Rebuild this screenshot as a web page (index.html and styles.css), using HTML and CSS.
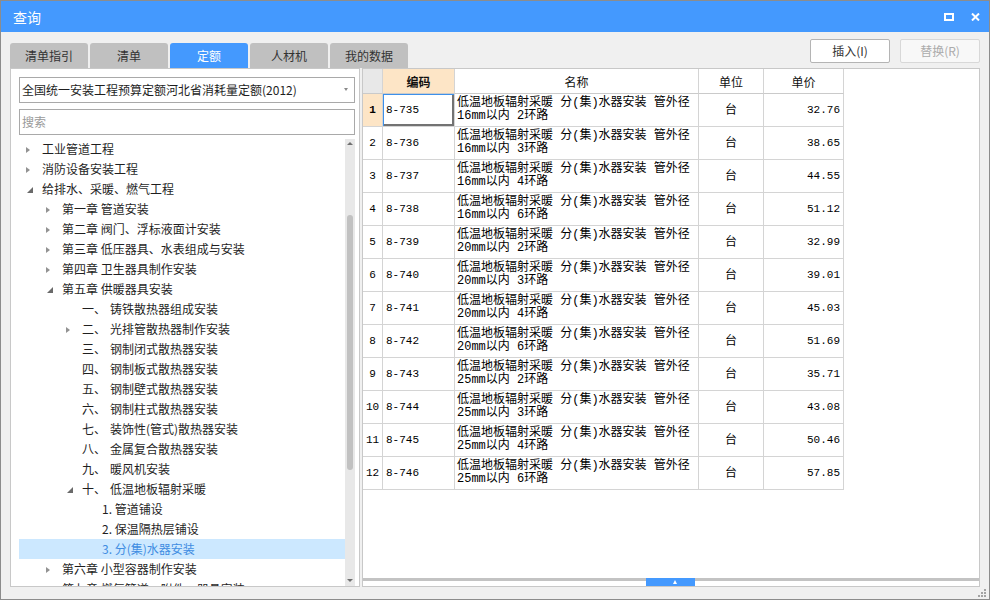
FILE: index.html
```html
<!DOCTYPE html>
<html lang="zh-CN">
<head>
<meta charset="utf-8">
<title>查询</title>
<link rel="stylesheet" href="styles.css">
</head>
<body>
<div class="window">
  <div class="titlebar">
    <span class="title">查询</span>
    <div class="win-btns">
      <svg class="ico" width="10" height="8" viewBox="0 0 10 8"><rect x="1" y="1" width="8" height="6" fill="none" stroke="#fff" stroke-width="2"/></svg>
      <svg class="ico" width="9" height="8" viewBox="0 0 9 8"><path d="M1 0.5L8 7.5M8 0.5L1 7.5" stroke="#fff" stroke-width="2"/></svg>
    </div>
  </div>
  <div class="toolbar">
    <div class="tabs">
      <div class="tab">清单指引</div>
      <div class="tab">清单</div>
      <div class="tab active">定额</div>
      <div class="tab">人材机</div>
      <div class="tab">我的数据</div>
    </div>
    <div class="actions">
      <button class="btn">插入(I)</button>
      <button class="btn disabled">替换(R)</button>
    </div>
  </div>
  <div class="main">
    <div class="left-panel">
      <div class="select"><span class="select-text">全国统一安装工程预算定额河北省消耗量定额(2012)</span><span class="caret"></span></div>
      <div class="search">搜索</div>
      <div class="tree-wrap">
        <div class="tree">
          <div class="row l0"><span class="tw"><i class="exp-c"></i></span>工业管道工程</div>
          <div class="row l0"><span class="tw"><i class="exp-c"></i></span>消防设备安装工程</div>
          <div class="row l0"><span class="tw"><i class="exp-o"></i></span>给排水、采暖、燃气工程</div>
          <div class="row l1"><span class="tw"><i class="exp-c"></i></span>第一章 管道安装</div>
          <div class="row l1"><span class="tw"><i class="exp-c"></i></span>第二章 阀门、浮标液面计安装</div>
          <div class="row l1"><span class="tw"><i class="exp-c"></i></span>第三章 低压器具、水表组成与安装</div>
          <div class="row l1"><span class="tw"><i class="exp-c"></i></span>第四章 卫生器具制作安装</div>
          <div class="row l1"><span class="tw"><i class="exp-o"></i></span>第五章 供暖器具安装</div>
          <div class="row l2"><span class="tw"></span><span class="ord">一、</span>铸铁散热器组成安装</div>
          <div class="row l2"><span class="tw"><i class="exp-c"></i></span><span class="ord">二、</span>光排管散热器制作安装</div>
          <div class="row l2"><span class="tw"></span><span class="ord">三、</span>钢制闭式散热器安装</div>
          <div class="row l2"><span class="tw"></span><span class="ord">四、</span>钢制板式散热器安装</div>
          <div class="row l2"><span class="tw"></span><span class="ord">五、</span>钢制壁式散热器安装</div>
          <div class="row l2"><span class="tw"></span><span class="ord">六、</span>钢制柱式散热器安装</div>
          <div class="row l2"><span class="tw"></span><span class="ord">七、</span>装饰性(管式)散热器安装</div>
          <div class="row l2"><span class="tw"></span><span class="ord">八、</span>金属复合散热器安装</div>
          <div class="row l2"><span class="tw"></span><span class="ord">九、</span>暖风机安装</div>
          <div class="row l2"><span class="tw"><i class="exp-o"></i></span><span class="ord">十、</span>低温地板辐射采暖</div>
          <div class="row l3"><span class="tw"></span>1. 管道铺设</div>
          <div class="row l3"><span class="tw"></span>2. 保温隔热层铺设</div>
          <div class="row l3 selected"><span class="tw"></span>3. 分(集)水器安装</div>
          <div class="row l1"><span class="tw"><i class="exp-c"></i></span>第六章 小型容器制作安装</div>
          <div class="row l1"><span class="tw"><i class="exp-c"></i></span>第七章 燃气管道、附件、器具安装</div>
        </div>
        <div class="vscroll">
          <div class="vs-up"><i class="tri-up"></i></div>
          <div class="vs-thumb"></div>
          <div class="vs-down"><i class="tri-down"></i></div>
        </div>
      </div>
    </div>
    <div class="right-panel">
      <div class="grid-area">
        <div class="grid">
          <div class="c hd corner"></div>
          <div class="c hd sel-col">编码</div>
          <div class="c hd">名称</div>
          <div class="c hd">单位</div>
          <div class="c hd">单价</div>

          <div class="c num sel-row">1</div><div class="c code focus">8-735</div><div class="c name">低温地板辐射采暖 分(集)水器安装 管外径 16mm以内 2环路</div><div class="c unit">台</div><div class="c price">32.76</div>
          <div class="c num">2</div><div class="c code">8-736</div><div class="c name">低温地板辐射采暖 分(集)水器安装 管外径 16mm以内 3环路</div><div class="c unit">台</div><div class="c price">38.65</div>
          <div class="c num">3</div><div class="c code">8-737</div><div class="c name">低温地板辐射采暖 分(集)水器安装 管外径 16mm以内 4环路</div><div class="c unit">台</div><div class="c price">44.55</div>
          <div class="c num">4</div><div class="c code">8-738</div><div class="c name">低温地板辐射采暖 分(集)水器安装 管外径 16mm以内 6环路</div><div class="c unit">台</div><div class="c price">51.12</div>
          <div class="c num">5</div><div class="c code">8-739</div><div class="c name">低温地板辐射采暖 分(集)水器安装 管外径 20mm以内 2环路</div><div class="c unit">台</div><div class="c price">32.99</div>
          <div class="c num">6</div><div class="c code">8-740</div><div class="c name">低温地板辐射采暖 分(集)水器安装 管外径 20mm以内 3环路</div><div class="c unit">台</div><div class="c price">39.01</div>
          <div class="c num">7</div><div class="c code">8-741</div><div class="c name">低温地板辐射采暖 分(集)水器安装 管外径 20mm以内 4环路</div><div class="c unit">台</div><div class="c price">45.03</div>
          <div class="c num">8</div><div class="c code">8-742</div><div class="c name">低温地板辐射采暖 分(集)水器安装 管外径 20mm以内 6环路</div><div class="c unit">台</div><div class="c price">51.69</div>
          <div class="c num">9</div><div class="c code">8-743</div><div class="c name">低温地板辐射采暖 分(集)水器安装 管外径 25mm以内 2环路</div><div class="c unit">台</div><div class="c price">35.71</div>
          <div class="c num">10</div><div class="c code">8-744</div><div class="c name">低温地板辐射采暖 分(集)水器安装 管外径 25mm以内 3环路</div><div class="c unit">台</div><div class="c price">43.08</div>
          <div class="c num">11</div><div class="c code">8-745</div><div class="c name">低温地板辐射采暖 分(集)水器安装 管外径 25mm以内 4环路</div><div class="c unit">台</div><div class="c price">50.46</div>
          <div class="c num">12</div><div class="c code">8-746</div><div class="c name">低温地板辐射采暖 分(集)水器安装 管外径 25mm以内 6环路</div><div class="c unit">台</div><div class="c price">57.85</div>
        </div>
      </div>
      <div class="hbar"><div class="hthumb"><i class="tri-up-w"></i></div></div>
    </div>
  </div>
  <svg class="grip" width="8" height="8" viewBox="0 0 8 8">
    <rect x="6" y="0" width="2" height="2" fill="#a3a3a3"/>
    <rect x="3" y="3" width="2" height="2" fill="#a3a3a3"/>
    <rect x="6" y="3" width="2" height="2" fill="#a3a3a3"/>
    <rect x="0" y="6" width="2" height="2" fill="#a3a3a3"/>
    <rect x="3" y="6" width="2" height="2" fill="#a3a3a3"/>
    <rect x="6" y="6" width="2" height="2" fill="#a3a3a3"/>
  </svg>
</div>
</body>
</html>
```

FILE: styles.css
```css
html, body {
  margin: 0;
  padding: 0;
  background: #ffffff;
}

body {
  font-family: "Noto Sans CJK SC", "Liberation Sans", sans-serif;
}

.window {
  position: relative;
  width: 990px;
  height: 600px;
  box-sizing: border-box;
  border: 1px solid #8c8c8c;
  background: #f0f0f0;
  display: flex;
  flex-direction: column;
  overflow: hidden;
}

/* Title bar */
.titlebar {
  flex: none;
  height: 31px;
  background: #4499fe;
  display: flex;
  align-items: center;
  padding: 0 9px 0 12px;
  color: #ffffff;
}

.title {
  font-size: 14px;
  line-height: 20px;
}

.win-btns {
  margin-left: auto;
  display: flex;
  align-items: center;
  gap: 17px;
}

.ico {
  display: block;
}

/* Tabs + actions */
.toolbar {
  flex: none;
  height: 36px;
  display: flex;
  padding: 0 9px;
}

.tabs {
  align-self: flex-end;
  display: flex;
  gap: 2px;
}

.tab {
  width: 78px;
  height: 25px;
  background: #c0c0c0;
  border-radius: 3px 3px 0 0;
  font-size: 12px;
  line-height: 25px;
  text-align: center;
  color: #333333;
}

.tab.active {
  background: #4499fe;
  color: #ffffff;
}

.actions {
  margin-left: auto;
  margin-top: 7px;
  align-self: flex-start;
  display: flex;
  gap: 10px;
}

.btn {
  width: 80px;
  height: 24px;
  box-sizing: border-box;
  padding: 0;
  border: 1px solid #b4b4b4;
  border-radius: 2px;
  background: #ffffff;
  font-family: "Noto Sans CJK SC", "Liberation Sans", sans-serif;
  font-size: 12px;
  line-height: 20px;
  color: #333333;
}

.btn.disabled {
  color: #ababab;
  border-color: #d8d8d8;
  background: #f8f8f8;
}

/* Main area */
.main {
  flex: 1;
  min-height: 0;
  display: flex;
  gap: 2px;
  padding: 0 9px 12px 9px;
}

.left-panel {
  flex: none;
  width: 350px;
  box-sizing: border-box;
  border: 1px solid #c8c8c8;
  background: #ffffff;
  padding: 8px 4px 0 8px;
  display: flex;
  flex-direction: column;
}

.select {
  flex: none;
  height: 26px;
  box-sizing: border-box;
  border: 1px solid #a9a9a9;
  display: flex;
  align-items: center;
  padding: 0 6px 0 2px;
  font-size: 12px;
  color: #1e1e1e;
}

.select-text {
  flex: 1;
  line-height: 20px;
}

.caret {
  width: 0;
  height: 0;
  border-top: 3px solid #8a8a8a;
  border-left: 2.5px solid transparent;
  border-right: 2.5px solid transparent;
  margin-top: -2px;
}

.search {
  flex: none;
  margin-top: 6px;
  height: 26px;
  box-sizing: border-box;
  border: 1px solid #a9a9a9;
  padding-left: 2px;
  font-size: 12px;
  line-height: 24px;
  color: #9a9a9a;
}

.tree-wrap {
  flex: 1;
  min-height: 0;
  margin-top: 4px;
  display: flex;
  overflow: hidden;
}

.tree {
  flex: 1;
  min-width: 0;
}

.row {
  height: 20px;
  display: flex;
  align-items: center;
  font-size: 12px;
  line-height: 20px;
  color: #1f1f1f;
  white-space: nowrap;
}

.row.l0 { padding-left: 3px; }
.row.l1 { padding-left: 23px; }
.row.l2 { padding-left: 43px; }
.row.l3 { padding-left: 63px; }

.row.selected {
  background: #cce8ff;
  color: #3f8de2;
}

.tw {
  flex: none;
  width: 20px;
  height: 20px;
  box-sizing: border-box;
  padding-left: 4px;
  display: flex;
  align-items: center;
}

.exp-c {
  width: 0;
  height: 0;
  border-left: 4px solid #929292;
  border-top: 3.5px solid transparent;
  border-bottom: 3.5px solid transparent;
  margin-top: 1px;
}

.exp-o {
  width: 0;
  height: 0;
  border-bottom: 6px solid #6a6a6a;
  border-left: 6px solid transparent;
  margin-left: 1px;
  margin-top: 1px;
}

.ord {
  display: inline-block;
  width: 28px;
}

.vscroll {
  flex: none;
  width: 10px;
  background: #e8e8e8;
  display: flex;
  flex-direction: column;
  align-items: center;
}

.vs-up {
  height: 12px;
  box-sizing: border-box;
  padding-top: 3px;
}

.tri-up {
  display: block;
  width: 0;
  height: 0;
  border-bottom: 3.5px solid #707070;
  border-left: 3.5px solid transparent;
  border-right: 3.5px solid transparent;
}

.vs-thumb {
  width: 6px;
  height: 255px;
  margin-top: 64px;
  border-radius: 3px;
  background: #c1c1c1;
}

.vs-down {
  margin-top: auto;
  height: 10px;
  box-sizing: border-box;
  padding-top: 3px;
}

.tri-down {
  display: block;
  width: 0;
  height: 0;
  border-top: 3.5px solid #707070;
  border-left: 3.5px solid transparent;
  border-right: 3.5px solid transparent;
}

/* Right panel grid */
.right-panel {
  flex: 1;
  min-width: 0;
  box-sizing: border-box;
  border: 1px solid #c8c8c8;
  background: #ffffff;
  display: flex;
  flex-direction: column;
}

.grid-area {
  flex: 1;
  min-height: 0;
}

.grid {
  display: grid;
  grid-template-columns: 20px 72px 244px 65px 80px;
  grid-template-rows: 25px;
  grid-auto-rows: 33px;
  width: 481px;
  font-family: "Liberation Mono", "Noto Sans CJK SC", monospace;
  font-size: 12px;
  line-height: 13px;
  color: #000000;
}

.c {
  box-sizing: border-box;
  border-right: 1px solid #d4d4d4;
  border-bottom: 1px solid #d4d4d4;
  display: flex;
  align-items: center;
  min-width: 0;
}

.hd {
  justify-content: center;
  font-family: "Noto Sans CJK SC", "Liberation Sans", sans-serif;
  color: #111111;
  border-bottom-color: #cacaca;
}

.hd.corner {
  background: #e8e8e8;
}

.hd.sel-col {
  background: #fde5c6;
  font-weight: bold;
}

.num {
  justify-content: center;
  font-size: 11px;
}

.num.sel-row {
  background: #fde5c6;
  font-weight: bold;
}

.code {
  padding-left: 3px;
  font-size: 11px;
}

.focus {
  box-shadow: inset 1px 1px 0 #3d90ea, inset -2px -2px 0 #737373;
}

.name {
  padding-left: 2px;
}

.unit {
  justify-content: center;
  padding-top: 2px;
}

.price {
  justify-content: flex-end;
  padding-right: 3px;
  font-size: 11px;
}

.hbar {
  flex: none;
  height: 8px;
  position: relative;
  background: linear-gradient(#c3c3c3, #c3c3c3) top / 100% 3px no-repeat;
}

.hthumb {
  position: absolute;
  left: 283px;
  top: 0;
  width: 49px;
  height: 8px;
  background: #4499fe;
  display: flex;
  align-items: center;
  justify-content: center;
}

.tri-up-w {
  display: block;
  width: 0;
  height: 0;
  margin-left: 8px;
  border-bottom: 4px solid #ffffff;
  border-left: 2.5px solid transparent;
  border-right: 2.5px solid transparent;
}

.grip {
  position: absolute;
  right: 3px;
  bottom: 2px;
}
```
